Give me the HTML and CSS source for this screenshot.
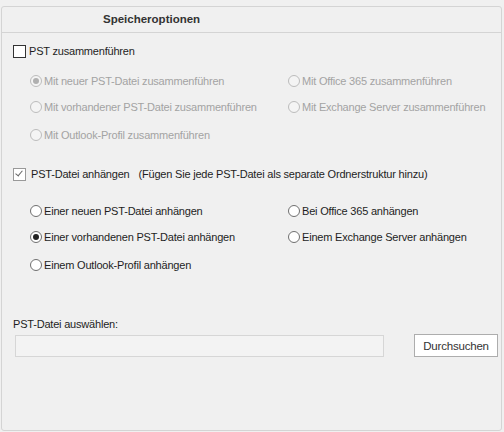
FILE: index.html
```html
<!DOCTYPE html>
<html lang="de">
<head>
  <meta charset="UTF-8">
  <title>Speicheroptionen</title>
<link rel="stylesheet" href="styles.css">
</head>
<body>
  <div class="panel">
    <div class="head">Speicheroptionen</div>
    <div class="body">
      <div class="check"><span class="box"></span>PST zusammenführen</div>
      <div class="opts off">
        <div class="opt"><span class="radio on"></span>Mit neuer PST-Datei zusammenführen</div>
        <div class="opt"><span class="radio"></span>Mit Office 365 zusammenführen</div>
        <div class="opt"><span class="radio"></span>Mit vorhandener PST-Datei zusammenführen</div>
        <div class="opt"><span class="radio"></span>Mit Exchange Server zusammenführen</div>
        <div class="opt"><span class="radio"></span>Mit Outlook-Profil zusammenführen</div>
      </div>
      <div class="check second"><span class="box ticked"></span>PST-Datei anhängen<span class="hint">(Fügen Sie jede PST-Datei als separate Ordnerstruktur hinzu)</span></div>
      <div class="opts append">
        <div class="opt"><span class="radio"></span>Einer neuen PST-Datei anhängen</div>
        <div class="opt"><span class="radio"></span>Bei Office 365 anhängen</div>
        <div class="opt"><span class="radio on"></span>Einer vorhandenen PST-Datei anhängen</div>
        <div class="opt"><span class="radio"></span>Einem Exchange Server anhängen</div>
        <div class="opt"><span class="radio"></span>Einem Outlook-Profil anhängen</div>
      </div>
      <div class="pick">PST-Datei auswählen:</div>
      <div class="pickrow">
        <div class="field"></div>
        <button class="btn">Durchsuchen</button>
      </div>
    </div>
  </div>
</body>
</html>
```

FILE: styles.css
```css
html,body{margin:0;padding:0;background:#f0f0f0;}
body{font-family:"Liberation Sans",Arial,sans-serif;font-size:11px;color:#1e1e1e;width:504px;height:432px;overflow:hidden;}
.panel{margin:6px 2px 0 1px;height:425px;box-sizing:border-box;border:1px solid #d4d4d4;border-radius:3px;}
.head{height:25px;line-height:24px;border-bottom:1px solid #d4d4d4;font-weight:bold;font-size:11.5px;color:#333;padding-left:101px;}
.body{padding:11px 0 0 11px;}
.check{display:flex;align-items:center;height:14px;letter-spacing:-0.2px;}
.box{width:11px;height:11px;border:1px solid #333;background:#fff;margin-right:3px;position:relative;}
.box.ticked{border-color:#999;}
.box.ticked::after{content:"";position:absolute;left:3px;top:0px;width:3px;height:6px;border:solid #666;border-width:0 1.5px 1.5px 0;transform:rotate(40deg);}
.second{margin-top:26px;}
.second .box{margin-right:5px;}
.hint{margin-left:9px;}
.opts{display:grid;grid-template-columns:258px 1fr;padding:16px 0 0 17px;row-gap:13px;}
.opts.append{padding-top:23px;}
.opts .opt:nth-child(5){margin-top:2px;}
.opt{display:flex;align-items:center;height:13px;letter-spacing:-0.2px;white-space:nowrap;}
.radio{width:10px;height:10px;border:1px solid #6f6f6f;border-radius:50%;background:#fff;margin-right:2px;position:relative;}
.radio.on::after{content:"";position:absolute;left:2px;top:2px;width:6px;height:6px;border-radius:50%;background:#222;}
.off{color:#a3a3a3;}
.off .radio{border-color:#bcbcbc;background:#f4f4f4;}
.off .radio.on::after{background:#b0b0b0;}
.pick{margin-top:46px;height:14px;line-height:14px;letter-spacing:-0.2px;}
.pickrow{display:flex;align-items:flex-start;margin-top:3px;padding-left:2px;}
.field{margin-top:1px;width:367px;height:20px;border:1px solid #d6d6d6;background:#f3f3f3;}
.btn{margin-left:30px;width:84px;height:23px;border:1px solid #adadad;background:#fff;font-family:inherit;font-size:11.5px;color:#333;letter-spacing:-0.2px;padding:0;}
```
